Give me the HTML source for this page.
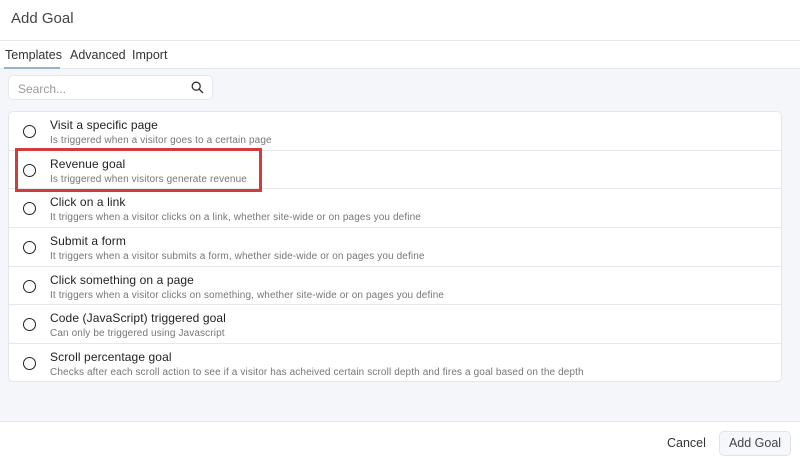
<!DOCTYPE html><html><head><style>
*{box-sizing:border-box;margin:0;padding:0}
body{width:800px;height:458px;overflow:hidden;background:#fff;font-family:"Liberation Sans",sans-serif;position:relative;color:#222}
.hdr{position:absolute;left:0;top:0;width:800px;height:41px;border-bottom:1px solid #e6e8ee}
.hdr span{position:absolute;left:11px;top:10px;font-size:15px;color:#444}
.tabs{position:absolute;top:41px;left:0;width:800px;height:28px;border-bottom:1px solid #e3e6ec;font-size:12.5px;color:#333}
.tabs span{position:absolute;top:7px}
.ul{position:absolute;left:4px;top:26px;width:56px;height:2px;background:#9ab0cc}
.body{position:absolute;top:69px;left:0;width:800px;height:353px;background:#f5f6fa;border-bottom:1px solid #e6e8ee}
.search{position:absolute;left:8px;top:6px;width:205px;height:25px;background:#fff;border:1px solid #e6e8ee;border-radius:5px;font-size:12px;color:#999;padding:6px 9px}
.list{position:absolute;left:8px;top:42px;width:774px;height:271px;background:#fff;border:1px solid #e3e6ec;border-radius:5px}
.row{position:relative;height:38.7px;border-bottom:1px solid #e6e8ee}
.row:last-child{border-bottom:none}
.row i{position:absolute;left:14px;top:13px;width:13px;height:13px;border:1.5px solid #222;border-radius:50%}
.row b{position:absolute;left:41px;top:6px;font-weight:normal;font-size:12px;color:#222;letter-spacing:0.1px}
.row small{position:absolute;left:41px;top:23px;font-size:10px;color:#777;letter-spacing:0.12px}
.red{position:absolute;left:15px;top:148px;width:247px;height:44px;border:3px solid #d23c3c}
.cancel{position:absolute;left:667px;top:436px;font-size:12.5px;color:#333}
.add{position:absolute;left:719px;top:431px;width:72px;height:25px;border:1px solid #e0e4ea;border-radius:5px;background:#f6f7fb;font-size:12.5px;color:#444;text-align:center;line-height:23px}
</style></head><body>
<div class="hdr"><span>Add Goal</span></div>
<div class="tabs"><span style="left:5px">Templates</span><span style="left:70px">Advanced</span><span style="left:132px">Import</span><div class="ul"></div></div>
<div class="body">
<div class="search">Search...<svg style="position:absolute;right:8px;top:5px" width="13" height="13" viewBox="0 0 13 13"><circle cx="5.2" cy="5.2" r="4" fill="none" stroke="#333" stroke-width="1.3"/><path d="M8.2 8.2L12 12" stroke="#333" stroke-width="1.4"/></svg></div>
<div class="list">
<div class="row"><i></i><b>Visit a specific page</b><small>Is triggered when a visitor goes to a certain page</small></div>
<div class="row"><i></i><b>Revenue goal</b><small>Is triggered when visitors generate revenue</small></div>
<div class="row"><i></i><b>Click on a link</b><small>It triggers when a visitor clicks on a link, whether site-wide or on pages you define</small></div>
<div class="row"><i></i><b>Submit a form</b><small>It triggers when a visitor submits a form, whether side-wide or on pages you define</small></div>
<div class="row"><i></i><b>Click something on a page</b><small>It triggers when a visitor clicks on something, whether site-wide or on pages you define</small></div>
<div class="row"><i></i><b>Code (JavaScript) triggered goal</b><small>Can only be triggered using Javascript</small></div>
<div class="row"><i></i><b>Scroll percentage goal</b><small>Checks after each scroll action to see if a visitor has acheived certain scroll depth and fires a goal based on the depth</small></div>
</div></div>
<div class="red"></div>
<div class="cancel">Cancel</div>
<div class="add">Add Goal</div>
</body></html>
